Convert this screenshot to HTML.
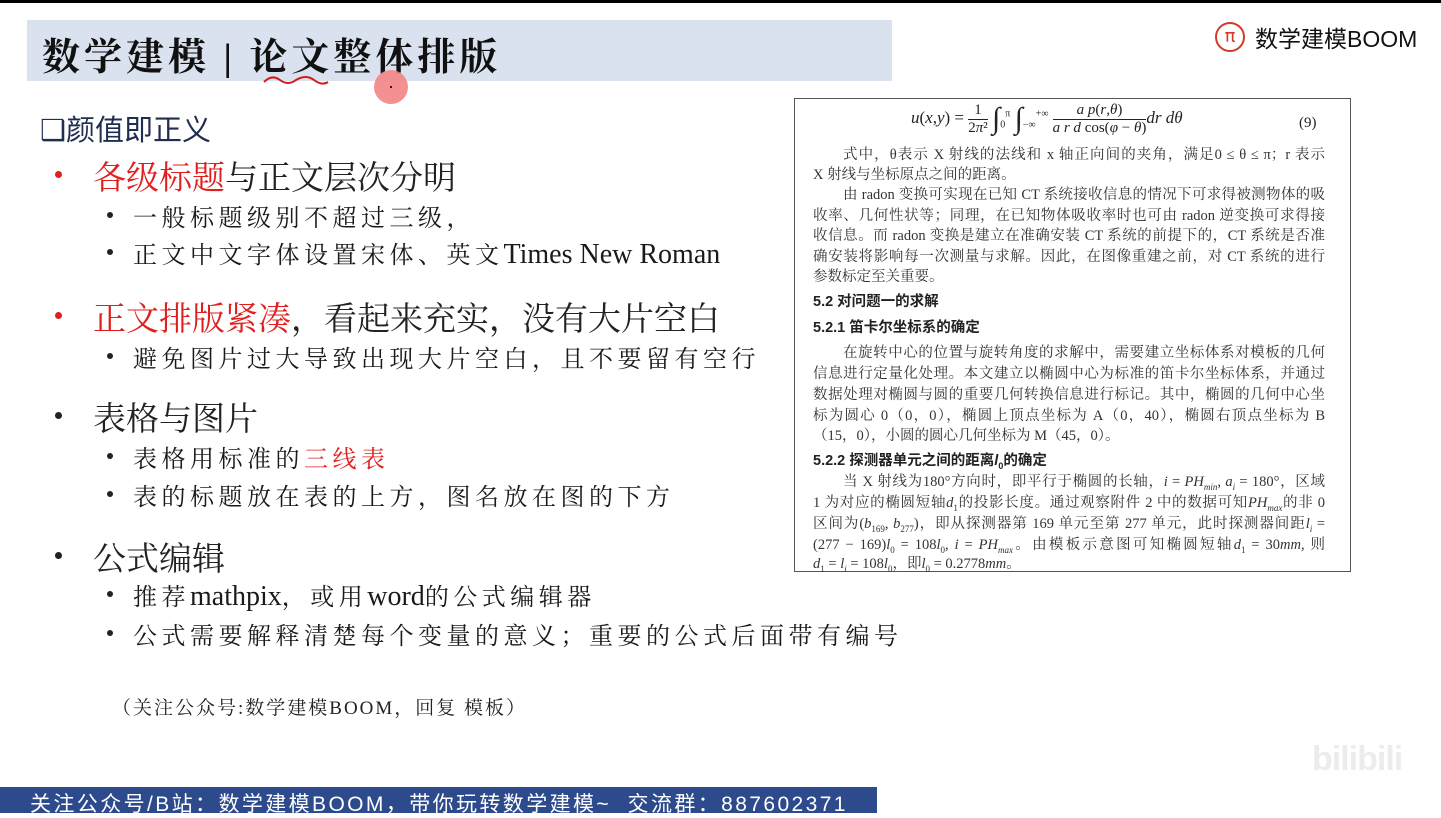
<!DOCTYPE html>
<html><head><meta charset="utf-8"><style>
*{margin:0;padding:0;box-sizing:border-box}
body{width:1441px;height:813px;position:relative;overflow:hidden;background:#fff;font-family:"Liberation Serif","Noto Serif CJK SC",serif;color:#1a1a1a}
.a{position:absolute;white-space:nowrap}
.band{position:absolute;left:27px;top:20px;width:865px;height:61px;background:#dbe2ef}
.title{left:42px;top:26px;font-size:38px;font-weight:bold;letter-spacing:4px;color:#111}
.h{font-family:"Liberation Serif","Noto Serif CJK SC",serif;font-size:33px;color:#222}
.red{color:#e0201e}
.dot{position:absolute;width:7px;height:7px;border-radius:50%;background:#222}
.sub{font-size:24px;letter-spacing:4.5px;color:#1a1a1a}
.doc{position:absolute;left:794px;top:98px;width:557px;height:474px;border:1.5px solid #555;background:#fff}
.l{position:absolute;left:18px;width:512px;font-size:14.5px;line-height:20px;color:#333;white-space:nowrap;text-align:justify;text-align-last:justify}
.i{left:48px;width:482px}
.b{font-weight:bold;text-align-last:left;color:#222;font-family:"Liberation Sans","Noto Sans CJK SC",sans-serif;font-size:14.5px}
.s{text-align-last:left}
i{font-style:italic}
</style></head><body>
<div class="a" style="left:0;top:0;width:1441px;height:3px;background:#000"></div>
<div class="band"></div>
<div class="a title">数学建模 | 论文整体排版</div>
<svg class="a" style="left:262px;top:72px" width="70" height="16"><path d="M2 10 Q10 2 18 8 T34 8 Q44 2 52 8 T66 10" fill="none" stroke="#d21a1a" stroke-width="2"/></svg>
<div class="a" style="left:374px;top:70px;width:34px;height:34px;border-radius:50%;background:#f28585;opacity:.9"></div>
<div class="a" style="left:390px;top:86px;width:2px;height:2px;background:#600"></div>
<div class="a" style="left:1215px;top:22px;width:30px;height:30px;border:2px solid #d23a2a;border-radius:50%;color:#d23a2a;font-size:18px;text-align:center;line-height:26px;font-family:'DejaVu Sans',sans-serif">π</div>
<div class="a" style="left:1255px;top:20px;font-size:23px;font-family:'Liberation Sans','Noto Sans CJK SC',sans-serif;color:#111">数学建模BOOM</div>

<div class="a" style="left:40px;top:107px;font-size:29px;font-family:'Liberation Sans','Noto Sans CJK SC',sans-serif;color:#1f2d4f">❑颜值即正义</div>

<div class="dot" style="left:55px;top:171px;background:#e0201e"></div>
<div class="a h" style="left:93px;top:152px"><span class="red">各级标题</span>与正文层次分明</div>
<div class="dot" style="left:107px;top:212px;width:6px;height:6px"></div>
<div class="a sub" style="left:133px;top:198px">一般标题级别不超过三级，</div>
<div class="dot" style="left:107px;top:249px;width:6px;height:6px"></div>
<div class="a sub" style="left:133px;top:235px">正文中文字体设置宋体、英文<span style="letter-spacing:0;font-size:28px">Times New Roman</span></div>

<div class="dot" style="left:55px;top:312px;background:#e0201e"></div>
<div class="a h" style="left:93px;top:293px"><span class="red">正文排版紧凑</span>，看起来充实，没有大片空白</div>
<div class="dot" style="left:107px;top:353px;width:6px;height:6px"></div>
<div class="a sub" style="left:133px;top:339px">避免图片过大导致出现大片空白，且不要留有空行</div>

<div class="dot" style="left:55px;top:412px"></div>
<div class="a h" style="left:93px;top:393px">表格与图片</div>
<div class="dot" style="left:107px;top:453px;width:6px;height:6px"></div>
<div class="a sub" style="left:133px;top:439px">表格用标准的<span class="red">三线表</span></div>
<div class="dot" style="left:107px;top:491px;width:6px;height:6px"></div>
<div class="a sub" style="left:133px;top:477px">表的标题放在表的上方，图名放在图的下方</div>

<div class="dot" style="left:55px;top:552px"></div>
<div class="a h" style="left:93px;top:533px">公式编辑</div>
<div class="dot" style="left:107px;top:591px;width:6px;height:6px"></div>
<div class="a sub" style="left:133px;top:577px">推荐<span style="letter-spacing:0;font-size:28px">mathpix</span>，或用<span style="letter-spacing:0;font-size:28px">word</span>的公式编辑器</div>
<div class="dot" style="left:107px;top:630px;width:6px;height:6px"></div>
<div class="a sub" style="left:133px;top:616px">公式需要解释清楚每个变量的意义；重要的公式后面带有编号</div>

<div class="a" style="left:112px;top:693px;font-size:19px;letter-spacing:2px;color:#222">（关注公众号:数学建模BOOM，回复 模板）</div>

<div class="doc">
<div class="a" style="left:116px;top:2px;font-size:17px;color:#222"><i>u</i>(<i>x</i>,<i>y</i>) = <span style="display:inline-block;vertical-align:middle;text-align:center;font-size:15px;line-height:18px">1<br><span style="border-top:1px solid #222">2<i>π</i>²</span></span> <span style="font-size:30px;vertical-align:middle">∫</span><sub style="font-size:10px">0</sub><sup style="font-size:10px">π</sup> <span style="font-size:30px;vertical-align:middle">∫</span><sub style="font-size:10px">−∞</sub><sup style="font-size:10px">+∞</sup> <span style="display:inline-block;vertical-align:middle;text-align:center;font-size:15px;line-height:18px"><i>a p</i>(<i>r</i>,<i>θ</i>)<br><span style="border-top:1px solid #222"><i>a r d</i> cos(<i>φ</i> − <i>θ</i>)</span></span><i>dr dθ</i></div>
<div class="a" style="left:504px;top:16px;font-size:15px;color:#222">(9)</div>
<div class="l i" style="top:46px">式中，θ表示 X 射线的法线和 x 轴正向间的夹角，满足0 ≤ θ ≤ π；r 表示</div>
<div class="l s" style="top:66px">X 射线与坐标原点之间的距离。</div>
<div class="l i" style="top:86px">由 radon 变换可实现在已知 CT 系统接收信息的情况下可求得被测物体的吸</div>
<div class="l" style="top:107px">收率、几何性状等；同理，在已知物体吸收率时也可由 radon 逆变换可求得接</div>
<div class="l" style="top:127px">收信息。而 radon 变换是建立在准确安装 CT 系统的前提下的，CT 系统是否准</div>
<div class="l" style="top:148px">确安装将影响每一次测量与求解。因此，在图像重建之前，对 CT 系统的进行</div>
<div class="l s" style="top:168px">参数标定至关重要。</div>
<div class="l b" style="top:193px">5.2 对问题一的求解</div>
<div class="l b" style="top:219px">5.2.1 笛卡尔坐标系的确定</div>
<div class="l i" style="top:244px">在旋转中心的位置与旋转角度的求解中，需要建立坐标体系对模板的几何</div>
<div class="l" style="top:265px">信息进行定量化处理。本文建立以椭圆中心为标准的笛卡尔坐标体系，并通过</div>
<div class="l" style="top:286px">数据处理对椭圆与圆的重要几何转换信息进行标记。其中，椭圆的几何中心坐</div>
<div class="l" style="top:307px">标为圆心 0（0，0），椭圆上顶点坐标为 A（0，40），椭圆右顶点坐标为 B</div>
<div class="l s" style="top:327px">（15，0），小圆的圆心几何坐标为 M（45，0）。</div>
<div class="l b" style="top:352px">5.2.2 探测器单元之间的距离<i>l</i><sub style="font-size:9px">0</sub>的确定</div>
<div class="l i" style="top:373px">当 X 射线为180°方向时，即平行于椭圆的长轴，<i>i</i> = <i>PH<sub style="font-size:9px">min</sub></i>, <i>a<sub style="font-size:9px">i</sub></i> = 180°，区域</div>
<div class="l" style="top:394px">1 为对应的椭圆短轴<i>d</i><sub style="font-size:9px">1</sub>的投影长度。通过观察附件 2 中的数据可知<i>PH<sub style="font-size:9px">max</sub></i>的非 0</div>
<div class="l" style="top:415px">区间为(<i>b</i><sub style="font-size:9px">169</sub>, <i>b</i><sub style="font-size:9px">277</sub>)，即从探测器第 169 单元至第 277 单元，此时探测器间距<i>l<sub style="font-size:9px">i</sub></i> =</div>
<div class="l" style="top:436px">(277 − 169)<i>l</i><sub style="font-size:9px">0</sub> = 108<i>l</i><sub style="font-size:9px">0</sub>, <i>i</i> = <i>PH<sub style="font-size:9px">max</sub></i>。由模板示意图可知椭圆短轴<i>d</i><sub style="font-size:9px">1</sub> = 30<i>mm</i>, 则</div>
<div class="l s" style="top:455px"><i>d</i><sub style="font-size:9px">1</sub> = <i>l<sub style="font-size:9px">i</sub></i> = 108<i>l</i><sub style="font-size:9px">0</sub>，即<i>l</i><sub style="font-size:9px">0</sub> = 0.2778<i>mm</i>。</div>
</div>

<div class="a" style="left:1312px;top:740px;font-size:34px;font-weight:bold;color:#ececec;font-family:'Liberation Sans',sans-serif;letter-spacing:-1px">bilibili</div>
<div class="a" style="left:0;top:787px;width:877px;height:26px;background:#2c4a8c"></div>
<div class="a" style="left:30px;top:788px;font-size:21px;letter-spacing:2.4px;color:#fff;font-family:'Liberation Sans','Noto Sans CJK SC',sans-serif">关注公众号/B站：数学建模BOOM，带你玩转数学建模~&nbsp; 交流群：887602371</div>
</body></html>
